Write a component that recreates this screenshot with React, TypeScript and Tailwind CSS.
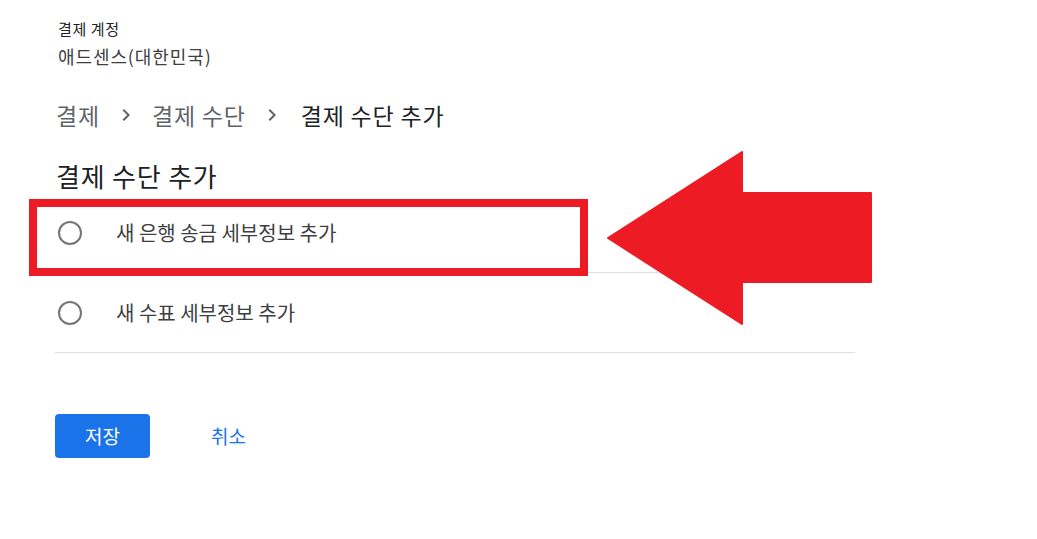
import React from 'react';

const Chevron = () => (
    <svg width="24" height="24" viewBox="0 0 24 24" fill="#5f6368" className="shrink-0">
        <path d="M10 6L8.59 7.41 13.17 12l-4.58 4.59L10 18l6-6z" />
    </svg>
);

const Radio = () => (
    <svg width="24" height="24" viewBox="0 0 24 24" className="shrink-0">
        <circle cx="12" cy="12" r="11" fill="none" stroke="#757575" strokeWidth="2" />
    </svg>
);

const options = ['새 은행 송금 세부정보 추가', '새 수표 세부정보 추가'];

export default function App() {
    return (
        <div
            className="relative w-[1037px] h-[539px] bg-white overflow-hidden"
            style={{ fontFamily: '"Noto Sans CJK KR", "Noto Sans", sans-serif' }}
        >
            <div className="pl-[55px] pt-[18px] w-[855px]">
                <p className="ml-[3px] text-[15px] leading-[21px] tracking-[0.6px] text-[#202124]">결제 계정</p>
                <p className="ml-[3px] mt-[5px] text-[18px] leading-[24px] tracking-[0.9px] text-[#3c4043]">애드센스(대한민국)</p>

                <div className="mt-[31px] flex items-center gap-[14px] text-[23px] leading-[32px] tracking-[0.8px] ml-px">
                    <span className="text-[#5f6368]">결제</span>
                    <Chevron />
                    <span className="text-[#5f6368]">결제 수단</span>
                    <Chevron />
                    <span className="text-[#202124] ml-[3px]">결제 수단 추가</span>
                </div>

                <h1 className="mt-[28px] ml-px text-[26px] leading-[34px] tracking-[0.8px] text-[#202124]">결제 수단 추가</h1>

                <div className="w-[800px]">
                    {options.map(label => (
                        <div key={label} className="h-[80px] flex items-center border-b border-[#e0e0e0] pl-[3px]">
                            <Radio />
                            <span className="ml-[34px] text-[20px] leading-[28px] text-[#3c4043]">{label}</span>
                        </div>
                    ))}
                </div>

                <div className="mt-[61px] flex items-center">
                    <button className="w-[95px] h-[44px] rounded-[4px] bg-[#1a73e8] text-white text-[19px]">저장</button>
                    <button className="ml-[61px] text-[#1a73e8] text-[19px]">취소</button>
                </div>
            </div>

            {/* red highlight overlay */}
            <div className="absolute left-[29px] top-[199px] w-[559px] h-[77px] border-[8px] border-[#ed1c24]" />
            <svg className="absolute left-0 top-0" width="1037" height="539" viewBox="0 0 1037 539">
                <polygon
                    points="608,238 742,152 742,193 871,193 871,282 742,282 742,324"
                    fill="#ed1c24"
                    stroke="#ed1c24"
                    strokeWidth="2"
                    strokeLinejoin="round"
                />
            </svg>
        </div>
    );
}
